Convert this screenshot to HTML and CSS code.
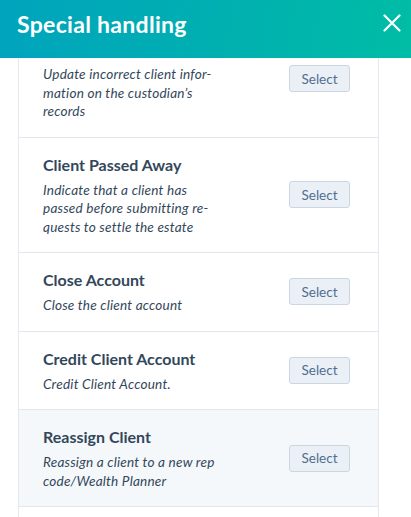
FILE: index.html
```html
<!DOCTYPE html>
<html>
<head>
<meta charset="utf-8">
<link rel="stylesheet" href="styles.css">
</head>
<body>
<div class="panel">
  <header class="header">
    <h1 class="title">Special handling</h1>
    <button class="close" aria-label="Close">
      <svg width="18" height="18" viewBox="0 0 18 18"><path d="M1.5 1.5 L16.5 16.5 M16.5 1.5 L1.5 16.5" stroke="#fff" stroke-width="2.2" stroke-linecap="round"/></svg>
    </button>
  </header>
  <div class="body">
    <ul class="list">
      <li class="row row-scrolled">
        <div class="text">
          <div class="desc">Update incorrect client infor-<br>mation on the custodian’s<br>records</div>
        </div>
        <button class="btn">Select</button>
      </li>
      <li class="row">
        <div class="text">
          <div class="name">Client Passed Away</div>
          <div class="desc">Indicate that a client has<br>passed before submitting re-<br>quests to settle the estate</div>
        </div>
        <button class="btn">Select</button>
      </li>
      <li class="row">
        <div class="text">
          <div class="name">Close Account</div>
          <div class="desc">Close the client account</div>
        </div>
        <button class="btn">Select</button>
      </li>
      <li class="row">
        <div class="text">
          <div class="name">Credit Client Account</div>
          <div class="desc">Credit Client Account.</div>
        </div>
        <button class="btn">Select</button>
      </li>
      <li class="row row-hover">
        <div class="text">
          <div class="name">Reassign Client</div>
          <div class="desc">Reassign a client to a new rep<br>code/Wealth Planner</div>
        </div>
        <button class="btn">Select</button>
      </li>
    </ul>
  </div>
</div>
</body>
</html>
```
FILE: styles.css
```css
* { box-sizing: border-box; }
html, body { margin: 0; padding: 0; }
body {
  width: 411px;
  height: 517px;
  overflow: hidden;
  background: #fff;
  font-family: Lato, "Open Sans", sans-serif;
  color: #33475b;
}
.panel { display: flex; flex-direction: column; height: 517px; }
.header {
  height: 58px;
  flex: none;
  display: flex;
  align-items: flex-start;
  justify-content: space-between;
  padding: 10px 10px 0 17px;
  background: linear-gradient(100deg, #00a4bd 0%, #00b0b0 55%, #00bda5 100%);
}
.title {
  margin: 0;
  font-size: 23px;
  line-height: 29px;
  font-weight: 700;
  color: #fff;
  letter-spacing: 0.3px;
}
.close {
  border: 0;
  background: none;
  padding: 0;
  width: 18px;
  height: 18px;
  margin-top: 4px;
  display: flex;
}
.body {
  flex: 1;
  display: flex;
  flex-direction: column;
  padding: 0 32px 0 18px;
}
.list {
  flex: 1;
  list-style: none;
  margin: 0;
  padding: 0;
  border-left: 1px solid #e5e8ef;
  border-right: 1px solid #e5e8ef;
}
.row {
  display: flex;
  align-items: center;
  justify-content: space-between;
  padding: 16px 28px 16px 24px;
  border-bottom: 1px solid #e2e6ee;
  background: #fff;
}
.row-scrolled { padding-top: 7px; }
.row-scrolled .btn { margin-bottom: 28px; }
.row-hover { background: #f5f8fa; }
.text { display: flex; flex-direction: column; gap: 5px; }
.name {
  font-size: 16px;
  font-weight: 700;
  line-height: 22px;
  color: #33475b;
}
.desc {
  font-size: 13.6px;
  font-style: italic;
  line-height: 18.5px;
  color: #33475b;
  letter-spacing: 0.2px;
}
.btn {
  flex: none;
  width: 61px;
  height: 27px;
  border: 1px solid #cbd6e2;
  border-radius: 3px;
  background: #eaf0f6;
  color: #506e91;
  font-family: inherit;
  font-size: 13.5px;
  padding: 0;
}
```
